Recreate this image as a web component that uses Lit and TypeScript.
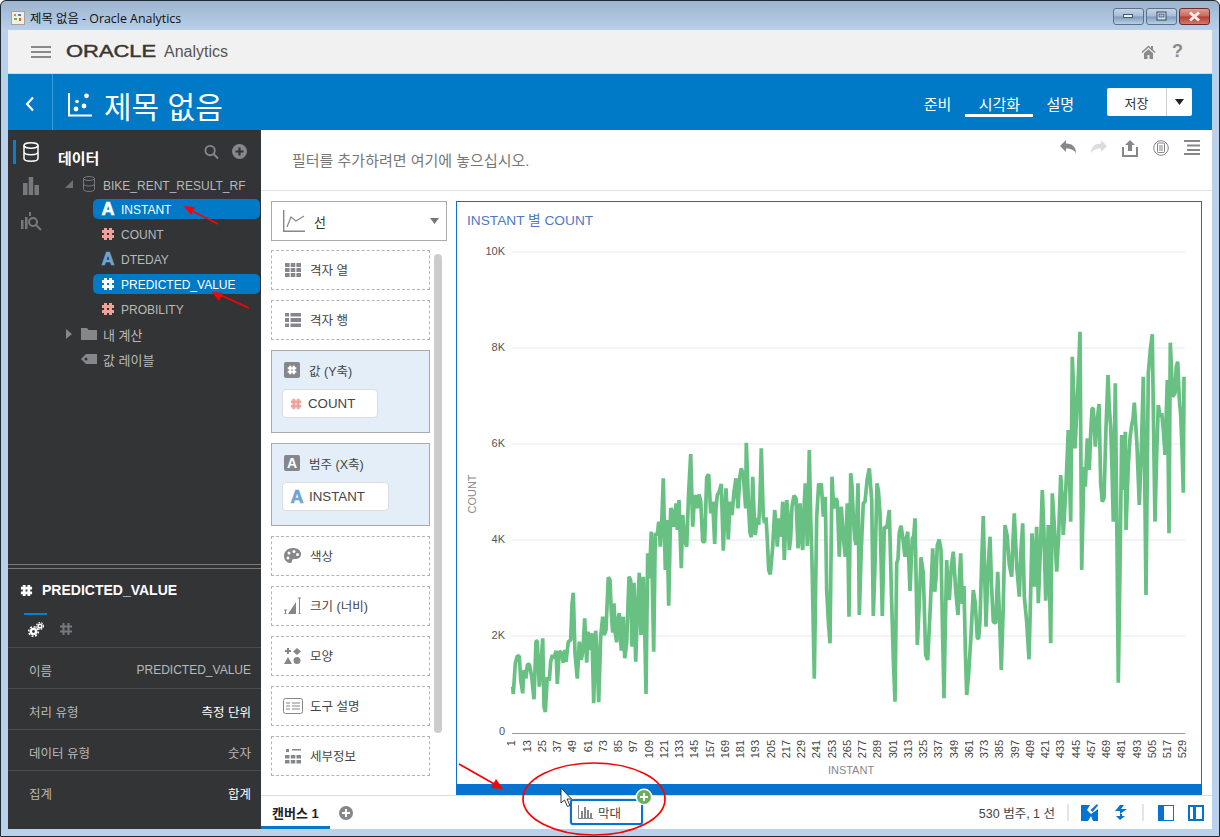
import { LitElement, html, css, svg } from "lit";
import { customElement } from "lit/decorators.js";

const A = `98,740 100,762 106,670 112,648 118,648 122,720 128,760 132,690 138,715 142,675 148,672 155,710 162,778 168,603 172,603 178,740 182,690 188,595 192,800 196,816 202,712 208,722 212,665 222,655 228,632 232,732 238,633 245,640 250,668 254,630 258,665 265,605 272,600 280,458 285,640 292,716 298,605 304,660 309,630 314,535 320,668 324,575 330,630 336,580 341,790 347,572 351,640 356,787 362,590 368,530 372,585 378,570 385,412 390,420 398,578 402,490 410,607 418,520 424,632 430,530 434,655 440,610 447,410 452,420 456,620 462,428 467,665 472,520 478,398 483,585 490,410 498,762 503,340 508,415 514,275 521,635 526,280 532,285 536,245 541,320 550,115 556,390 561,240 566,497 572,205 580,260 588,190 592,270 597,180 604,385 608,225 614,300 620,320 632,42 638,260 646,165 652,205 662,182 668,305 674,305 680,112 686,103 692,220 698,185 704,312 712,165 718,155 724,132 730,332 738,145 745,298 750,185 756,225 768,115 774,205 784,85 790,105 797,205 799,8 806,210 814,292 818,110 826,285 836,255 844,25 850,230 858,232 866,390 871,403 878,320 884,210 892,320 897,235 903,290 908,185 913,360 920,180 928,330 936,200 948,175 954,325 960,190 968,330 976,130 982,318 988,30 996,365 1003,716 1010,230 1016,130 1024,130 1030,230 1036,170 1040,450 1050,610 1056,110 1064,205 1072,185 1078,350 1084,200 1090,290 1096,350 1102,190 1107,530 1112,100 1120,230 1128,315 1134,130 1138,525`;
const B = `100,70 105,65 118,-35 125,60 130,408 141,10 150,100 157,408 163,140 178,90 185,370 195,665 200,250 208,158 218,170 225,230 233,155 240,333 247,175 255,115 262,495 273,232 280,280 287,525 293,540 308,205 314,335 322,195 333,210 342,655 350,240 358,360 370,215 384,405 392,220 397,372 402,318 410,645 416,580 430,330 442,475 450,420 460,108 468,440 480,170 490,425 497,430 503,275 514,570 525,135 538,255 545,290 553,100 568,350 578,130 583,350 597,538 606,160 613,320 620,140 625,370 637,30 647,362 655,135 662,490 667,40 680,275 692,-15 700,165 715,-150 722,125 727,-370 735,-95 750,-445 755,270 762,-40 766,20 772,-125 778,-30 782,-140 790,-215 796,-100 800,-165 807,-228 812,10 822,55 834,-315 842,-160 850,125 856,-290 865,608 875,-135 880,30 886,-145 888,150 895,-45 905,-165 913,-232 928,75 940,-310 948,345 955,-320 967,-437 975,125 985,-225 995,-200 1005,-75 1012,-300 1017,160 1021,-412 1028,-250 1035,-260 1043,-355 1052,-195 1060,38 1062,-310`;
const conv = (s: string, ox: number, oy: number): [number, number][] =>
  s.split(" ").map((p) => {
    const [x, y] = p.split(",").map(Number);
    return [ox + x / 3, oy + y / 3] as [number, number];
  });
// The traced vertices carry the shape; a deterministic midpoint wiggle gives the density of 530 data points.
const traced = [...conv(A, 480, 440), ...conv(B, 830, 480)];
const dense: string[] = [];
traced.forEach(([x, y], i) => {
  const next = traced[i + 1];
  dense.push(`${x.toFixed(1)},${y.toFixed(1)}`);
  if (next && next[0] - x >= 2.6) {
    const wiggle = (i % 2 ? 1 : -1) * (4 + (i * 7) % 9);
    dense.push(`${((x + next[0]) / 2).toFixed(1)},${((y + next[1]) / 2 + wiggle).toFixed(1)}`);
  }
});
const LINE = dense.join(" ");

const hash = (color: string, size = 14) => html`<svg class="ico" width=${size} height=${size} viewBox="0 0 14 14"><path d="M4.5 1v12M9.5 1v12M1 4.5h12M1 9.5h12" stroke=${color} stroke-width="3" fill="none"/></svg>`;
const letterA = (cls: string) => html`<span class="glyph-a ${cls}">A</span>`;

const gridIcons = [0, 1, 2].flatMap((c) => [0, 1, 2].map((r) => svg`<rect x=${c * 5.7} y=${r * 5} width="4.6" height="4" fill="#85878a"/>`));

const ticksY: [string, number][] = [["10K", 252], ["8K", 348], ["6K", 444], ["4K", 540], ["2K", 636]];
const ticksX: number[] = [];
for (let i = 1; i <= 529; i += 12) ticksX.push(i);

@customElement("app-root")
export class AppRoot extends LitElement {
  static styles = css`
    :host { display: block; width: 1220px; height: 837px; position: relative; overflow: hidden;
      font-family: "Liberation Sans", "Noto Sans CJK KR", sans-serif; color: #333; }
    * { box-sizing: border-box; }
    svg { display: block; flex: none; }
    .window { width: 1220px; height: 837px; display: flex; flex-direction: column; border: 1px solid #1f2a33; border-radius: 6px 6px 0 0;
      background: linear-gradient(#9db4cf 0, #b9d1ea 30px); padding: 0 7px 7px; }
    .titlebar { height: 29px; flex: none; display: flex; align-items: center; padding: 0 2px 0 3px; font: 12.4px "Open Sans", "Noto Sans CJK KR", sans-serif; color: #111; }
    .favicon { margin-right: 5px; margin-top: 4px; }
    .titlebar .ttl { margin-top: 4px; }
    .winbtns { margin-left: auto; display: flex; gap: 2px; margin-top: 1px; }
    .wb { width: 31px; height: 17px; border: 1px solid #5c6f86; border-radius: 3px; display: flex; align-items: center; justify-content: center;
      background: linear-gradient(#c5d5e8 0, #a6bcd6 48%, #7f9bbd 52%, #b9cfe6 100%); }
    .wb.close { background: linear-gradient(#dd9d94 0, #c8685c 48%, #b43c30 52%, #d07a6c 100%); border-color: #6e2a28; }
    .client { flex: 1; display: flex; flex-direction: column; background: #fff; min-height: 0; }
    .apphead { height: 44px; flex: none; background: #f1f1f1; border-bottom: 1px solid #d8d8d8; display: flex; align-items: center; padding: 0 29px 0 23px; }
    .menu { width: 20px; height: 12px; display: flex; flex-direction: column; justify-content: space-between; margin-right: 15px; margin-top: 1px; }
    .menu i { display: block; height: 2px; background: #8a8a8a; }
    .oracle { width: 90px; height: 18px; font-size: 16px; line-height: 18px; color: #3a3634; font-weight: 400; -webkit-text-stroke: .45px #3a3634; }
    .oracle span { display: block; transform: scaleX(1.37); transform-origin: 0 50%; white-space: nowrap; }
    .analytics { margin-left: 8px; font-size: 16px; color: #555; }
    .help { margin-left: auto; display: flex; align-items: center; gap: 16px; color: #8a8a8a; font-size: 18px; font-weight: 700; }
    .bluebar { height: 56px; flex: none; background: #0079c7; display: flex; align-items: center; color: #fff; }
    .back { width: 45px; height: 100%; border-right: 1px solid #3b9bd8; display: flex; align-items: center; justify-content: center; flex: none; padding-top: 4px; }
    .proj { margin: 5px 12px 0 15px; }
    .pname { font-size: 30px; line-height: 40px; flex: none; margin-top: 12px; }
    .tabs { margin-left: auto; display: flex; align-items: stretch; font-size: 15px; height: 27px; margin-top: 2px; }
    .tabs span { display: flex; align-items: center; }
    .tabs .t1 { margin-right: 14px; }
    .tabs .t2 { width: 68px; justify-content: center; border-bottom: 3px solid #fff; margin-right: 13px; padding-top: 3px; }
    .save { margin-left: 33px; margin-right: 20px; width: 85px; height: 28px; background: #fff; border-radius: 2px; color: #333; display: flex; font-size: 13px; flex: none; }
    .save b { font-weight: 400; flex: 1; display: flex; align-items: center; justify-content: center; border-right: 1px solid #ccc; }
    .save i { width: 25px; display: flex; align-items: center; justify-content: center; }
    .body { flex: 1; display: flex; min-height: 0; }
    .side { width: 253px; flex: none; background: #333436; display: flex; flex-direction: column; color: #b9b9b9; font-size: 12px; }
    .sidetop { height: 435px; flex: none; display: flex; border-bottom: 1px solid #7a7a7a; }
    .rail { width: 42px; flex: none; padding-top: 10px; display: flex; flex-direction: column; gap: 10px; }
    .ri { height: 24px; margin-left: 5px; border-left: 3px solid transparent; padding-left: 7px; display: flex; align-items: center; }
    .ri.on { border-left-color: #0a7fd0; }
    .ri.last { margin-top: 1px; padding-left: 5px; }
    .tree { flex: 1; min-width: 0; }
    .treehead { height: 44px; display: flex; padding: 14px 14px 0 8px; }
    .treehead b { color: #fff; font-size: 15px; margin-top: 5px; line-height: 20px; }
    .treehead .hi { margin-left: auto; display: flex; gap: 13px; height: 16px; }
    .row { height: 20px; margin-bottom: 5px; display: flex; align-items: center; white-space: nowrap; }
    .row > span:last-child { padding-top: 1px; }
    .row.par { padding-left: 13px; gap: 6px; font-size: 12px; }
    .row.par.first > span:last-child { padding-top: 3px; }
    .row.par.ko { font-size: 13px; }
    .arrow { width: 12px; display: flex; justify-content: center; }
    .ib { width: 16px; display: flex; justify-content: center; }
    .row.fld { margin-left: 43px; margin-right: 1px; padding-left: 8px; gap: 6px; border-radius: 5px; }
    .row.fld.sel { background: #0079c7; color: #fff; }
    .ico { flex: none; }
    .glyph-a { font-weight: 700; font-size: 18px; line-height: 18px; width: 14px; display: flex; justify-content: center; flex: none; -webkit-text-stroke: .6px currentColor; padding: 0 !important; }
    .glyph-a.white { color: #fff; }
    .glyph-a.blue { color: #6ea5d2; }
    .sidedet { flex: 1; margin-top: 3px; border-top: 1px solid #7a7a7a; min-height: 0; }
    .dethead { height: 44px; display: flex; align-items: center; gap: 9px; padding: 0 0 2px 12px; color: #fff; font-size: 14px; font-weight: 700; }
    .dettabs { height: 34px; display: flex; margin-left: 16px; }
    .dt { width: 23px; height: 34px; border-top: 2px solid #0a7fd0; display: flex; justify-content: center; padding-top: 7px; }
    .dt.off { border-color: transparent; margin-left: 7px; }
    .prop { height: 41px; border-top: 1px solid #4b4c4e; display: flex; align-items: center; justify-content: space-between; padding: 4px 10px 0 21px; font-size: 12.5px; }
    .prop .w { color: #fff; }
    .prop .en { font-size: 12px; }
    .main { flex: 1; display: flex; flex-direction: column; min-width: 0; }
    .filter { height: 61px; flex: none; border-bottom: 1px solid #dfe3e8; display: flex; padding: 10px 12px 0 31px; }
    .filter .ph { font-size: 15px; color: #777; margin-top: 12px; line-height: 18px; }
    .tools { margin-left: auto; display: flex; gap: 15px; height: 18px; }
    .content { flex: 1; display: flex; min-height: 0; }
    .gram { width: 195px; flex: none; padding: 10px 0 0 10px; }
    .select { width: 176px; height: 40px; border: 1px solid #aaa; display: flex; align-items: center; padding: 0 7px 0 11px; font-size: 13px; }
    .select .lb { margin-left: 9px; }
    .select .car { margin-left: auto; }
    .slots { display: flex; margin-top: 9px; }
    .col { width: 159px; display: flex; flex-direction: column; gap: 10px; }
    .slot { border: 1px dashed #b5b5b5; height: 40px; display: flex; align-items: center; padding: 0 0 1px 12px; gap: 9px; font-size: 12.5px; color: #444; white-space: nowrap; }
    .slot .sic { width: 17px; display: flex; justify-content: center; flex: none; }
    .well { border: 1px solid #aaa; background: #e3eef8; height: 83px; padding: 10px 0 0 10px; font-size: 12.5px; color: #444; }
    .wh { display: flex; align-items: center; gap: 9px; padding-left: 2px; height: 18px; white-space: nowrap; }
    .badge { width: 16px; height: 16px; background: #85878a; border-radius: 2px; display: flex; align-items: center; justify-content: center; flex: none; color: #fff; font-size: 14px; font-weight: 700; }
    .pill { margin-top: 10px; height: 29px; background: #fff; border: 1px solid #ddd; border-radius: 4px; display: inline-flex; align-items: center; gap: 6px; padding: 0 6px 0 7px; font-size: 13.3px; color: #444; }
    .pill.p1 { width: 96px; }
    .pill.p2 { width: 107px; gap: 5px; }
    .scroll { width: 8px; height: 479px; margin: 4px 0 0 4px; background: #ccc; border-radius: 4px; flex: none; }
    .chart { width: 746px; height: 594px; margin-top: 10px; border: 1px solid #0573cf; border-bottom-width: 11px; flex: none; }
    .chart text { font-family: "Liberation Sans", "Noto Sans CJK KR", sans-serif; }
    .bottom { height: 34px; flex: none; border-top: 1px solid #ddd; display: flex; align-items: center; padding-right: 8px; font-size: 12.5px; }
    .ctab { width: 69px; height: 33px; border-bottom: 3px solid #0079c7; display: flex; align-items: center; padding: 2px 0 0 11px; font-weight: 700; font-size: 13px; color: #222; flex: none; }
    .addc { margin-left: 9px; }
    .status { margin-left: auto; color: #444; }
    .sep { width: 2px; height: 17px; background: #e2e6ea; margin: 0 12px; flex: none; }
    .sep.b { margin: 0 14px 0 15px; }
    .bi { display: flex; gap: 16px; align-items: center; }
    .bi.p { gap: 14px; }
    .overlay { position: absolute; left: 0; top: 0; pointer-events: none; }
    .ghost { position: absolute; left: 570px; top: 799px; width: 73px; height: 26px; background: #fff; border: 2px solid #0573cf; border-radius: 3px;
      display: flex; align-items: center; gap: 5px; padding-left: 6px; font-size: 12.5px; color: #444; box-shadow: 0 0 2px rgba(0,0,0,.3); }
  `;

  private chart() {
    return html`<svg width="744" height="582" viewBox="457 202 744 582">
      <text x="467" y="225" font-size="13.7" fill="#4d79c7">INSTANT 별 COUNT</text>
      ${ticksY.map(([l, y]) => svg`<line x1="512" x2="1185" y1=${y} y2=${y} stroke="#e4e7ee"/><text x="505" y=${y + 3} font-size="11" text-anchor="end" fill="#555">${l}</text>`)}
      <line x1="512" x2="1185" y1="733.5" y2="733.5" stroke="#999"/>
      <text x="505" y="735" font-size="11" text-anchor="end" fill="#555">0</text>
      <text transform="translate(476 494) rotate(-90)" font-size="11" text-anchor="middle" fill="#888">COUNT</text>
      ${ticksX.map((n) => svg`<text transform="translate(${(511.7 + (n - 1) * 1.271 + 3.6).toFixed(1)} 740) rotate(-90)" font-size="11" text-anchor="end" fill="#444">${n}</text>`)}
      <text x="851" y="774" font-size="11" text-anchor="middle" fill="#888">INSTANT</text>
      <polyline points=${LINE} fill="none" stroke="#68c182" stroke-width="3.7" stroke-linejoin="bevel"/>
    </svg>`;
  }

  render() {
    return html`
    <div class="window">
      <div class="titlebar">
        <svg class="favicon" width="14" height="14" viewBox="0 0 14 14"><rect x=".5" y=".5" width="13" height="13" fill="#f3efe2" stroke="#a8a294"/><rect x="3" y="3" width="2" height="2" fill="#e08a2c"/><rect x="7" y="3" width="3" height="2" fill="#3b8ed0"/><rect x="3" y="7" width="3" height="2" fill="#6cb04a"/><rect x="8" y="7" width="2" height="3" fill="#d05a4a"/></svg>
        <span class="ttl">제목 없음 - Oracle Analytics</span>
        <div class="winbtns">
          <div class="wb"><svg width="11" height="6"><rect x=".5" y="1.5" width="9" height="3" fill="#f0f4f8" stroke="#44566c"/></svg></div>
          <div class="wb"><svg width="11" height="10"><rect x="1" y="1" width="9" height="8" fill="#d5e2f0" stroke="#33465c"/><rect x="3" y="3" width="5" height="3" fill="#a6bcd6" stroke="#33465c" stroke-width=".7"/></svg></div>
          <div class="wb close"><svg width="13" height="11" viewBox="0 0 13 11"><path d="M2 1.5l9 8M11 1.5l-9 8" stroke="#f7eeee" stroke-width="3"/></svg></div>
        </div>
      </div>
      <div class="client">
        <div class="apphead">
          <div class="menu"><i></i><i></i><i></i></div>
          <div class="oracle"><span>ORACLE</span></div>
          <span class="analytics">Analytics</span>
          <div class="help">
            <svg width="15" height="14" viewBox="0 0 15 14"><path d="M7.5 .5L.5 7l1 1 6-5.500 6 5.500 1-1-2.500-2.300V1h-2v1.900zM3 8.300V14h3.500v-4h2v4H12V8.300L7.500 4.200z" fill="#8a8a8a"/></svg>
            <span>?</span>
          </div>
        </div>
        <div class="bluebar">
          <div class="back"><svg width="10" height="16" viewBox="0 0 10 16"><path d="M8 1.500L2 8l6 6.500" fill="none" stroke="#fff" stroke-width="2.200"/></svg></div>
          <svg class="proj" width="24" height="24" viewBox="0 0 24 24"><path d="M1 0v22.500h23" fill="none" stroke="#fff" stroke-width="2"/><circle cx="8" cy="16" r="2.400" fill="#fff"/><circle cx="16" cy="13" r="2.400" fill="#fff"/><circle cx="9" cy="8.500" r="1.800" fill="#fff"/><circle cx="18.500" cy="2.800" r="2.400" fill="#fff"/></svg>
          <span class="pname">제목 없음</span>
          <div class="tabs"><span class="t1">준비</span><span class="t2">시각화</span><span>설명</span></div>
          <div class="save"><b>저장</b><i><svg width="9" height="6"><path d="M0 0h9L4.500 6z" fill="#222"/></svg></i></div>
        </div>
        <div class="body">
          <aside class="side">
            <div class="sidetop">
              <div class="rail">
                <div class="ri on"><svg width="16" height="20" viewBox="0 0 16 20"><ellipse cx="8" cy="3.500" rx="7" ry="2.700" fill="none" stroke="#fff" stroke-width="1.500"/><path d="M1 3.500v13c0 1.500 3 2.700 7 2.700s7-1.200 7-2.700v-13M1 10c0 1.500 3 2.700 7 2.700s7-1.200 7-2.700" fill="none" stroke="#fff" stroke-width="1.500"/></svg></div>
                <div class="ri"><svg width="16" height="18" viewBox="0 0 16 18"><rect x="0" y="6" width="4.500" height="12" fill="#77797c"/><rect x="5.700" y="0" width="4.500" height="18" fill="#77797c"/><rect x="11.500" y="8" width="4.500" height="10" fill="#77797c"/></svg></div>
                <div class="ri last"><svg width="21" height="20" viewBox="0 0 21 20"><rect x="0" y="9" width="2.500" height="9" fill="#77797c"/><rect x="4" y="6" width="2.500" height="12" fill="#77797c"/><rect x="8" y="1" width="2" height="4" fill="#77797c"/><circle cx="12" cy="11" r="4" fill="none" stroke="#77797c" stroke-width="2"/><path d="M15 14l5 5" stroke="#77797c" stroke-width="2"/></svg></div>
              </div>
              <div class="tree">
                <div class="treehead"><b>데이터</b>
                  <div class="hi">
                    <svg width="15" height="16" viewBox="0 0 16 16"><circle cx="6.500" cy="6.500" r="5" fill="none" stroke="#85878a" stroke-width="2"/><path d="M10 10l5 5" stroke="#85878a" stroke-width="2.200"/></svg>
                    <svg width="15" height="15" viewBox="0 0 15 15"><circle cx="7.500" cy="7.500" r="7.500" fill="#85878a"/><path d="M7.500 3.500v8M3.500 7.500h8" stroke="#333436" stroke-width="2.200"/></svg>
                  </div>
                </div>
                <div class="row par first">
                  <span class="arrow"><svg width="8" height="8"><path d="M8 0v8H0z" fill="#6d6f72"/></svg></span>
                  <span class="ib"><svg width="12" height="16" viewBox="0 0 12 16"><path d="M.5 2.500v11c0 1 2.500 2 5.500 2s5.500-1 5.500-2v-11c0-1-2.500-2-5.500-2s-5.500 1-5.500 2c0 1 2.500 2 5.500 2s5.500-1 5.500-2" fill="none" stroke="#77797c"/><path d="M.5 8c0 1 2.500 2 5.500 2s5.500-1 5.500-2" fill="none" stroke="#77797c"/></svg></span>
                  <span>BIKE_RENT_RESULT_RF</span>
                </div>
                <div class="row fld sel">${letterA("white")}<span>INSTANT</span></div>
                <div class="row fld">${hash("#f0a299")}<span>COUNT</span></div>
                <div class="row fld">${letterA("blue")}<span>DTEDAY</span></div>
                <div class="row fld sel">${hash("#fff")}<span>PREDICTED_VALUE</span></div>
                <div class="row fld">${hash("#f0a299")}<span>PROBILITY</span></div>
                <div class="row par ko">
                  <span class="arrow"><svg width="6" height="10"><path d="M0 0l6 5-6 5z" fill="#85878a"/></svg></span>
                  <svg width="16" height="12" viewBox="0 0 16 12"><path d="M0 0h6l1.500 2H16v10H0z" fill="#85878a"/></svg>
                  <span>내 계산</span>
                </div>
                <div class="row par ko">
                  <span class="arrow"></span>
                  <svg width="16" height="10" viewBox="0 0 16 10"><path d="M5 0h11v10H5L0 5z" fill="#85878a"/><circle cx="5" cy="5" r="1.500" fill="#333436"/></svg>
                  <span>값 레이블</span>
                </div>
              </div>
            </div>
            <div class="sidedet">
              <div class="dethead">${hash("#fff", 13)}<span>PREDICTED_VALUE</span></div>
              <div class="dettabs">
                <div class="dt"><svg width="16" height="15" viewBox="0 0 16 15"><circle cx="5.500" cy="9.500" r="3.800" fill="#fff"/><circle cx="5.500" cy="9.500" r="4.800" fill="none" stroke="#fff" stroke-width="1.600" stroke-dasharray="2 1.700"/><circle cx="5.500" cy="9.500" r="1.400" fill="#333436"/><circle cx="12" cy="4" r="2.600" fill="#fff"/><circle cx="12" cy="4" r="3.400" fill="none" stroke="#fff" stroke-width="1.200" stroke-dasharray="1.600 1.200"/><circle cx="12" cy="4" r="1" fill="#333436"/></svg></div>
                <div class="dt off"><svg width="14" height="14" viewBox="0 0 14 14"><path d="M4.500 1v12M9.500 1v12M1 4.500h12M1 9.500h12" stroke="#77797c" stroke-width="2" fill="none"/></svg></div>
              </div>
              <div class="prop"><span>이름</span><span class="en">PREDICTED_VALUE</span></div>
              <div class="prop"><span>처리 유형</span><span class="w">측정 단위</span></div>
              <div class="prop"><span>데이터 유형</span><span>숫자</span></div>
              <div class="prop"><span>집계</span><span class="w">합계</span></div>
            </div>
          </aside>
          <main class="main">
            <div class="filter">
              <span class="ph">필터를 추가하려면 여기에 놓으십시오.</span>
              <div class="tools">
                <svg width="16" height="15" viewBox="0 0 16 15"><path d="M0 6l6-6v3.500c6 0 10 3 10 10-1.500-3.500-5-5-10-5V12z" fill="#85878a"/></svg>
                <svg width="16" height="15" viewBox="0 0 16 15"><path d="M16 6l-6-6v3.500c-6 0-10 3-10 10 1.500-3.500 5-5 10-5V12z" fill="#dcdcdc"/></svg>
                <svg width="16" height="17" viewBox="0 0 16 17"><path d="M1 7v9h14V7" fill="none" stroke="#85878a" stroke-width="2"/><path d="M8 0L3 5h3v6h4V5h3z" fill="#85878a"/></svg>
                <svg width="16" height="16" viewBox="0 0 16 16"><circle cx="8" cy="8" r="7.300" fill="none" stroke="#85878a"/><rect x="4.500" y="3" width="7" height="9.500" rx="1" fill="none" stroke="#85878a"/><path d="M6 6h4M6 8h4M6 10h4" stroke="#85878a"/></svg>
                <svg width="16" height="15" viewBox="0 0 16 15"><path d="M0 1h16M3 5.500h13M3 10h13M0 14h16" stroke="#85878a" stroke-width="2"/></svg>
              </div>
            </div>
            <div class="content">
              <div class="gram">
                <div class="select">
                  <svg width="22" height="22" viewBox="0 0 22 22"><path d="M.7 0v21.300H22" fill="none" stroke="#85878a" stroke-width="1.400"/><path d="M4 17L8 7l5 4 8-5" fill="none" stroke="#85878a" stroke-width="1.200"/></svg>
                  <span class="lb">선</span>
                  <svg class="car" width="9" height="6"><path d="M0 0h9L4.500 6z" fill="#777"/></svg>
                </div>
                <div class="slots">
                  <div class="col">
                    <div class="slot"><span class="sic"><svg width="16" height="14">${gridIcons}</svg></span>격자 열</div>
                    <div class="slot"><span class="sic"><svg width="16" height="14" viewBox="0 0 16 14"><path d="M0 0h4v3.500H0zM5.500 0H16v3.500H5.500zM0 5h4v4H0zM5.500 5H16v4H5.500zM0 10.500h4V14H0zM5.500 10.500H16V14H5.500z" fill="#85878a"/></svg></span>격자 행</div>
                    <div class="well">
                      <div class="wh"><span class="badge">${hash("#fff", 10)}</span>값 (Y축)</div>
                      <div class="pill p1">${hash("#f0a299", 12)}<span>COUNT</span></div>
                    </div>
                    <div class="well">
                      <div class="wh"><span class="badge">A</span>범주 (X축)</div>
                      <div class="pill p2">${letterA("blue")}<span>INSTANT</span></div>
                    </div>
                    <div class="slot"><span class="sic"><svg width="17" height="15" viewBox="0 0 17 15"><path d="M9 0C4 0 0 3.500 0 8c0 4 3 7 6 7 2 0 2-1.500 2-2.500S9 11 11 11c3 0 6-1 6-5 0-4-4-6-8-6z" fill="#85878a"/><circle cx="5" cy="5" r="1.500" fill="#fff"/><circle cx="10" cy="3.500" r="1.500" fill="#fff"/><circle cx="13.500" cy="6.500" r="1.500" fill="#fff"/><circle cx="4" cy="10" r="1.500" fill="#fff"/></svg></span>색상</div>
                    <div class="slot"><span class="sic"><svg width="17" height="17" viewBox="0 0 17 17"><path d="M4 17L12 5v12z" fill="#85878a"/><path d="M15.500 1v16M14 1h3M14 17h3M1.500 13v4M0 13h3M0 17h3" stroke="#85878a" fill="none"/></svg></span>크기 (너비)</div>
                    <div class="slot"><span class="sic"><svg width="17" height="16" viewBox="0 0 17 16"><path d="M4 0v6M1 3h6" stroke="#85878a" stroke-width="2"/><path d="M13 0l4 3.500L13 7 9 3.500zM4 9l4 7H0z" fill="#85878a"/><circle cx="13" cy="12.500" r="3.500" fill="#85878a"/></svg></span>모양</div>
                    <div class="slot"><span class="sic"><svg width="20" height="16" viewBox="0 0 20 16"><rect x=".5" y=".5" width="19" height="15" rx="2" fill="none" stroke="#85878a"/><path d="M3 5h4M9 5h8M3 8h4M9 8h8M3 11h4M9 11h8" stroke="#85878a"/></svg></span>도구 설명</div>
                    <div class="slot"><span class="sic"><svg width="16" height="16" viewBox="0 0 16 16"><path d="M1 1h3v3H1zM7 1h9v1.500H7zM0 7h4.500v3.500H0zM5.800 7h4.500v3.500H5.800zM11.500 7H16v3.500h-4.500zM0 12h4.500v3.500H0zM5.800 12h4.500v3.500H5.800zM11.500 12H16v3.500h-4.500z" fill="#85878a"/></svg></span>세부정보</div>
                  </div>
                  <div class="scroll"></div>
                </div>
              </div>
              <div class="chart">${this.chart()}</div>
            </div>
            <div class="bottom">
              <div class="ctab">캔버스 1</div>
              <svg class="addc" width="14" height="14" viewBox="0 0 14 14"><circle cx="7" cy="7" r="7" fill="#85878a"/><path d="M7 3v8M3 7h8" stroke="#fff" stroke-width="2"/></svg>
              <span class="status">530 범주, 1 선</span>
              <span class="sep"></span>
              <div class="bi">
                <svg width="17" height="17" viewBox="0 0 17 17"><path d="M0 1h9L6 6l4 4 7-5v12h-5l-2-5-3 5H0z" fill="#0573cf"/><path d="M16 0l1 1.500-5.500 6.500-2-2z" fill="#0573cf"/></svg>
                <svg width="13" height="15" viewBox="0 0 13 15"><path d="M6 0h4L7 4h6l-7 5V6H1zM6 9l2 0v2h3l-5 4-4-4h4z" fill="#0573cf"/></svg>
              </div>
              <span class="sep b"></span>
              <div class="bi p">
                <svg width="16" height="16" viewBox="0 0 16 16"><rect x=".5" y=".5" width="15" height="15" fill="#fff" stroke="#0573cf"/><rect width="6" height="16" fill="#0573cf"/></svg>
                <svg width="16" height="16" viewBox="0 0 16 16"><rect x="1" y="1" width="14" height="14" fill="#fff" stroke="#0573cf" stroke-width="2"/><rect x="5" y="1" width="3" height="14" fill="#0573cf"/></svg>
              </div>
            </div>
          </main>
        </div>
      </div>
    </div>
    <div class="ghost">
      <svg width="15" height="14" viewBox="0 0 15 14"><path d="M.5 0v13.500H15" fill="none" stroke="#85878a"/><path d="M3 6h2v7H3zM6 2h2v11H6zM9 5h2v8H9zM12 8h2v5h-2z" fill="#85878a"/></svg>
      <span>막대</span>
    </div>
    <svg class="overlay" width="1220" height="837" viewBox="0 0 1220 837">
      <path d="M218 224L190 210M249 308L218 294M459 764L496 785" stroke="#f00" stroke-width="1.800" fill="none"/>
      <path d="M184 206l11 1-4 8zM212 292l11 1-4 8zM503 789l-12-1 5-9z" fill="#f00"/>
      <ellipse cx="594" cy="799" rx="71" ry="36" fill="none" stroke="#f00" stroke-width="1.700"/>
      <circle cx="644" cy="797" r="8.500" fill="#fff"/>
      <circle cx="644" cy="797" r="7" fill="#6cb05a"/>
      <path d="M644 793v8M640 797h8" stroke="#fff" stroke-width="2"/>
      <path d="M561 788v15l3.500-3 3 6.500 2.500-1-3-6.500h4.500z" fill="#fff" stroke="#222" stroke-width=".9"/>
    </svg>`;
  }
}
